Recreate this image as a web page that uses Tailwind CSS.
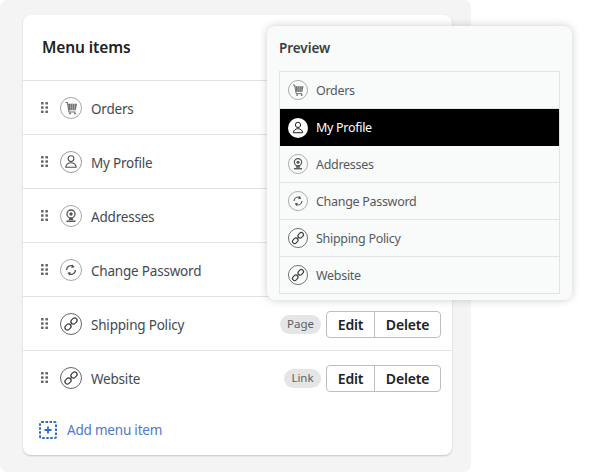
<!DOCTYPE html>
<html lang="en">
<head>
<meta charset="UTF-8">
<title>Menu items</title>
<script src="https://cdn.jsdelivr.net/npm/@tailwindcss/browser@4"></script>
</head>
<body class="bg-white font-['Noto_Sans','Open_Sans',sans-serif] overflow-hidden">
<svg class="hidden">
  <symbol id="grip" viewBox="0 0 7 11"><g fill="#63676b"><rect x="0" y="0" width="2.600" height="2.600" rx="0.600"/><rect x="4.400" y="0" width="2.600" height="2.600" rx="0.600"/><rect x="0" y="4.200" width="2.600" height="2.600" rx="0.600"/><rect x="4.400" y="4.200" width="2.600" height="2.600" rx="0.600"/><rect x="0" y="8.400" width="2.600" height="2.600" rx="0.600"/><rect x="4.400" y="8.400" width="2.600" height="2.600" rx="0.600"/></g></symbol>
  <symbol id="cart" viewBox="0 0 22 22"><circle cx="11" cy="11" r="10.500" fill="none" stroke="#8f8f8f" stroke-width="0.800"/><path d="M5.500 5.500h1.800l1.700 9.500h6.500" fill="none" stroke="#6f6f6f" stroke-width="1.100"/><path d="M8 6.800h9l-1.200 6.400H9.200z" fill="#6f6f6f"/><path d="M10.700 7v6M12.600 7v6M14.500 7v6" stroke="#fff" stroke-width="0.400"/><circle cx="10" cy="16.500" r="1" fill="#6f6f6f"/><circle cx="15" cy="16.500" r="1" fill="#6f6f6f"/></symbol>
  <symbol id="user" viewBox="0 0 22 22"><circle cx="11" cy="11" r="10.500" fill="none" stroke="#808080" stroke-width="0.800"/><circle cx="11" cy="7.600" r="2.900" fill="none" stroke="#4b4f54" stroke-width="1.100"/><path d="M5.800 16.200c.4-2.800 2.400-4.400 5.200-4.400s4.800 1.600 5.200 4.400z" fill="none" stroke="#4b4f54" stroke-width="1.100" stroke-linejoin="round"/></symbol>
  <symbol id="user-solid" viewBox="0 0 22 22"><circle cx="11" cy="11" r="11" fill="#fff"/><circle cx="11" cy="7.600" r="2.900" fill="none" stroke="#222" stroke-width="1.100"/><path d="M5.800 16.200c.4-2.800 2.400-4.400 5.200-4.400s4.800 1.600 5.200 4.400z" fill="none" stroke="#222" stroke-width="1.100" stroke-linejoin="round"/></symbol>
  <symbol id="pin" viewBox="0 0 22 22"><circle cx="11" cy="11" r="10.500" fill="none" stroke="#8f8f8f" stroke-width="0.800"/><circle cx="11" cy="9" r="4" fill="none" stroke="#555" stroke-width="1.300"/><circle cx="11" cy="9" r="1.700" fill="#555"/><path d="M9.300 13l-.6 2h4.600l-.6-2z" fill="#555"/><path d="M6.500 16.200h9" stroke="#555" stroke-width="1.500"/></symbol>
  <symbol id="sync" viewBox="0 0 22 22"><circle cx="11" cy="11" r="10.500" fill="none" stroke="#8f8f8f" stroke-width="0.800"/><path d="M6.600 11A4.400 4.400 0 0 1 13.800 7.600M15.400 11A4.400 4.400 0 0 1 8.200 14.400" fill="none" stroke="#4b4f54" stroke-width="1.200"/><path d="M12.200 5.500l2.400 2.800-3.300.7zM9.800 16.500l-2.400-2.800 3.300-.7z" fill="#4b4f54"/></symbol>
  <symbol id="link" viewBox="0 0 22 22"><circle cx="11" cy="11" r="10.500" fill="none" stroke="#555" stroke-width="0.900"/><g fill="none" stroke="#3a3a3a" stroke-width="1.200"><rect x="10.700" y="5.600" width="6.600" height="4.800" rx="2.400" transform="rotate(-45 14 8)"/><rect x="4.700" y="11.600" width="6.600" height="4.800" rx="2.400" transform="rotate(-45 8 14)"/><path d="M9.800 12.200l2.400-2.400"/></g></symbol>
</svg>

<div class="relative w-[471px] h-[472px] bg-[#f4f4f4] rounded-lg pt-[15px] pl-[23px]">
  <div class="w-[429px] h-[440px] bg-white rounded-lg shadow-[0_1px_2px_rgba(0,0,0,0.2)]">
    <div class="h-[65px] pl-[19px] pt-[19px] text-[15.500px] tracking-[-0.1px] leading-[26px] font-semibold text-[#202223]">Menu items</div>

    <div class="h-[54px] flex items-center border-t border-[#e3e3e3] pt-px pl-[18px] pr-[11px]">
      <svg class="w-[7px] h-[11px] mb-px"><use href="#grip"/></svg>
      <svg class="w-[22px] h-[22px] ml-[12px]"><use href="#cart"/></svg>
      <span class="ml-[9px] mt-[2px] text-[13.500px] tracking-[-0.2px] text-[#44494f]">Orders</span>
    </div>
    <div class="h-[54px] flex items-center border-t border-[#e3e3e3] pt-px pl-[18px] pr-[11px]">
      <svg class="w-[7px] h-[11px] mb-px"><use href="#grip"/></svg>
      <svg class="w-[22px] h-[22px] ml-[12px]"><use href="#user"/></svg>
      <span class="ml-[9px] mt-[2px] text-[13.500px] tracking-[-0.2px] text-[#44494f]">My Profile</span>
    </div>
    <div class="h-[54px] flex items-center border-t border-[#e3e3e3] pt-px pl-[18px] pr-[11px]">
      <svg class="w-[7px] h-[11px] mb-px"><use href="#grip"/></svg>
      <svg class="w-[22px] h-[22px] ml-[12px]"><use href="#pin"/></svg>
      <span class="ml-[9px] mt-[2px] text-[13.500px] tracking-[-0.2px] text-[#44494f]">Addresses</span>
    </div>
    <div class="h-[54px] flex items-center border-t border-[#e3e3e3] pt-px pl-[18px] pr-[11px]">
      <svg class="w-[7px] h-[11px] mb-px"><use href="#grip"/></svg>
      <svg class="w-[22px] h-[22px] ml-[12px]"><use href="#sync"/></svg>
      <span class="ml-[9px] mt-[2px] text-[13.500px] tracking-[-0.2px] text-[#44494f]">Change Password</span>
    </div>
    <div class="h-[54px] flex items-center border-t border-[#e3e3e3] pt-px pl-[18px] pr-[11px]">
      <svg class="w-[7px] h-[11px] mb-px"><use href="#grip"/></svg>
      <svg class="w-[22px] h-[22px] ml-[12px]"><use href="#link"/></svg>
      <span class="ml-[9px] mt-[2px] text-[13.500px] tracking-[-0.2px] text-[#44494f]">Shipping Policy</span>
      <span class="ml-auto h-[19px] w-[41px] flex items-center justify-center rounded-full bg-[#e4e5e7] text-[11.500px] text-[#5c5f62]">Page</span>
      <div class="ml-[5px] flex h-[27px] w-[115px] rounded border border-[#babfc3] text-[14px] tracking-[-0.2px] font-semibold text-[#202223]">
        <span class="w-[48px] flex items-center justify-center border-r border-[#babfc3]">Edit</span>
        <span class="flex-1 flex items-center justify-center">Delete</span>
      </div>
    </div>
    <div class="h-[54px] flex items-center border-t border-[#e3e3e3] pt-px pl-[18px] pr-[11px]">
      <svg class="w-[7px] h-[11px] mb-px"><use href="#grip"/></svg>
      <svg class="w-[22px] h-[22px] ml-[12px]"><use href="#link"/></svg>
      <span class="ml-[9px] mt-[2px] text-[13.500px] tracking-[-0.2px] text-[#44494f]">Website</span>
      <span class="ml-auto h-[19px] w-[37px] flex items-center justify-center rounded-full bg-[#e4e5e7] text-[11.500px] text-[#5c5f62]">Link</span>
      <div class="ml-[5px] flex h-[27px] w-[115px] rounded border border-[#babfc3] text-[14px] tracking-[-0.2px] font-semibold text-[#202223]">
        <span class="w-[48px] flex items-center justify-center border-r border-[#babfc3]">Edit</span>
        <span class="flex-1 flex items-center justify-center">Delete</span>
      </div>
    </div>

    <div class="flex items-center pl-[16px] mt-[14px]">
      <svg class="w-[18px] h-[18px]" viewBox="0 0 18 18"><rect x="1" y="1" width="16" height="16" rx="1.500" fill="none" stroke="#2c6ecb" stroke-width="2" stroke-dasharray="2.500 1.500"/><path d="M9 5.500v7M5.500 9h7" stroke="#2c6ecb" stroke-width="1.800"/></svg>
      <span class="ml-[10px] text-[13.500px] tracking-[-0.2px] leading-[24px] text-[#4d78cf]">Add menu item</span>
    </div>
  </div>

  <!-- preview floats over the card -->
  <div class="absolute left-[267px] top-[26px] w-[305px] h-[274px] bg-[#f9fbfa] rounded-lg shadow-[0_0_8px_rgba(0,0,0,0.2)] pt-[12px] px-[12px]">
    <div class="text-[13.500px] tracking-[-0.05px] leading-[21px] font-semibold text-[#3a3f44]">Preview</div>
    <div class="mt-[12px] border border-[#e3e3e3] text-[12.500px] tracking-[-0.3px] text-[#55595e]">
      <div class="h-[37px] flex items-center pl-[8px] border-b border-[#e3e3e3]">
        <svg class="w-5 h-5"><use href="#cart"/></svg><span class="ml-[8px] mt-[2px]">Orders</span>
      </div>
      <div class="h-[37px] flex items-center pl-[8px] bg-black text-white">
        <svg class="w-5 h-5"><use href="#user-solid"/></svg><span class="ml-[8px] mt-[2px]">My Profile</span>
      </div>
      <div class="h-[37px] flex items-center pl-[8px] border-b border-[#e3e3e3]">
        <svg class="w-5 h-5"><use href="#pin"/></svg><span class="ml-[8px] mt-[2px]">Addresses</span>
      </div>
      <div class="h-[37px] flex items-center pl-[8px] border-b border-[#e3e3e3]">
        <svg class="w-5 h-5"><use href="#sync"/></svg><span class="ml-[8px] mt-[2px]">Change Password</span>
      </div>
      <div class="h-[37px] flex items-center pl-[8px] border-b border-[#e3e3e3]">
        <svg class="w-5 h-5"><use href="#link"/></svg><span class="ml-[8px] mt-[2px]">Shipping Policy</span>
      </div>
      <div class="h-[36px] flex items-center pl-[8px]">
        <svg class="w-5 h-5"><use href="#link"/></svg><span class="ml-[8px] mt-[2px]">Website</span>
      </div>
    </div>
  </div>
</div>
</body>
</html>
